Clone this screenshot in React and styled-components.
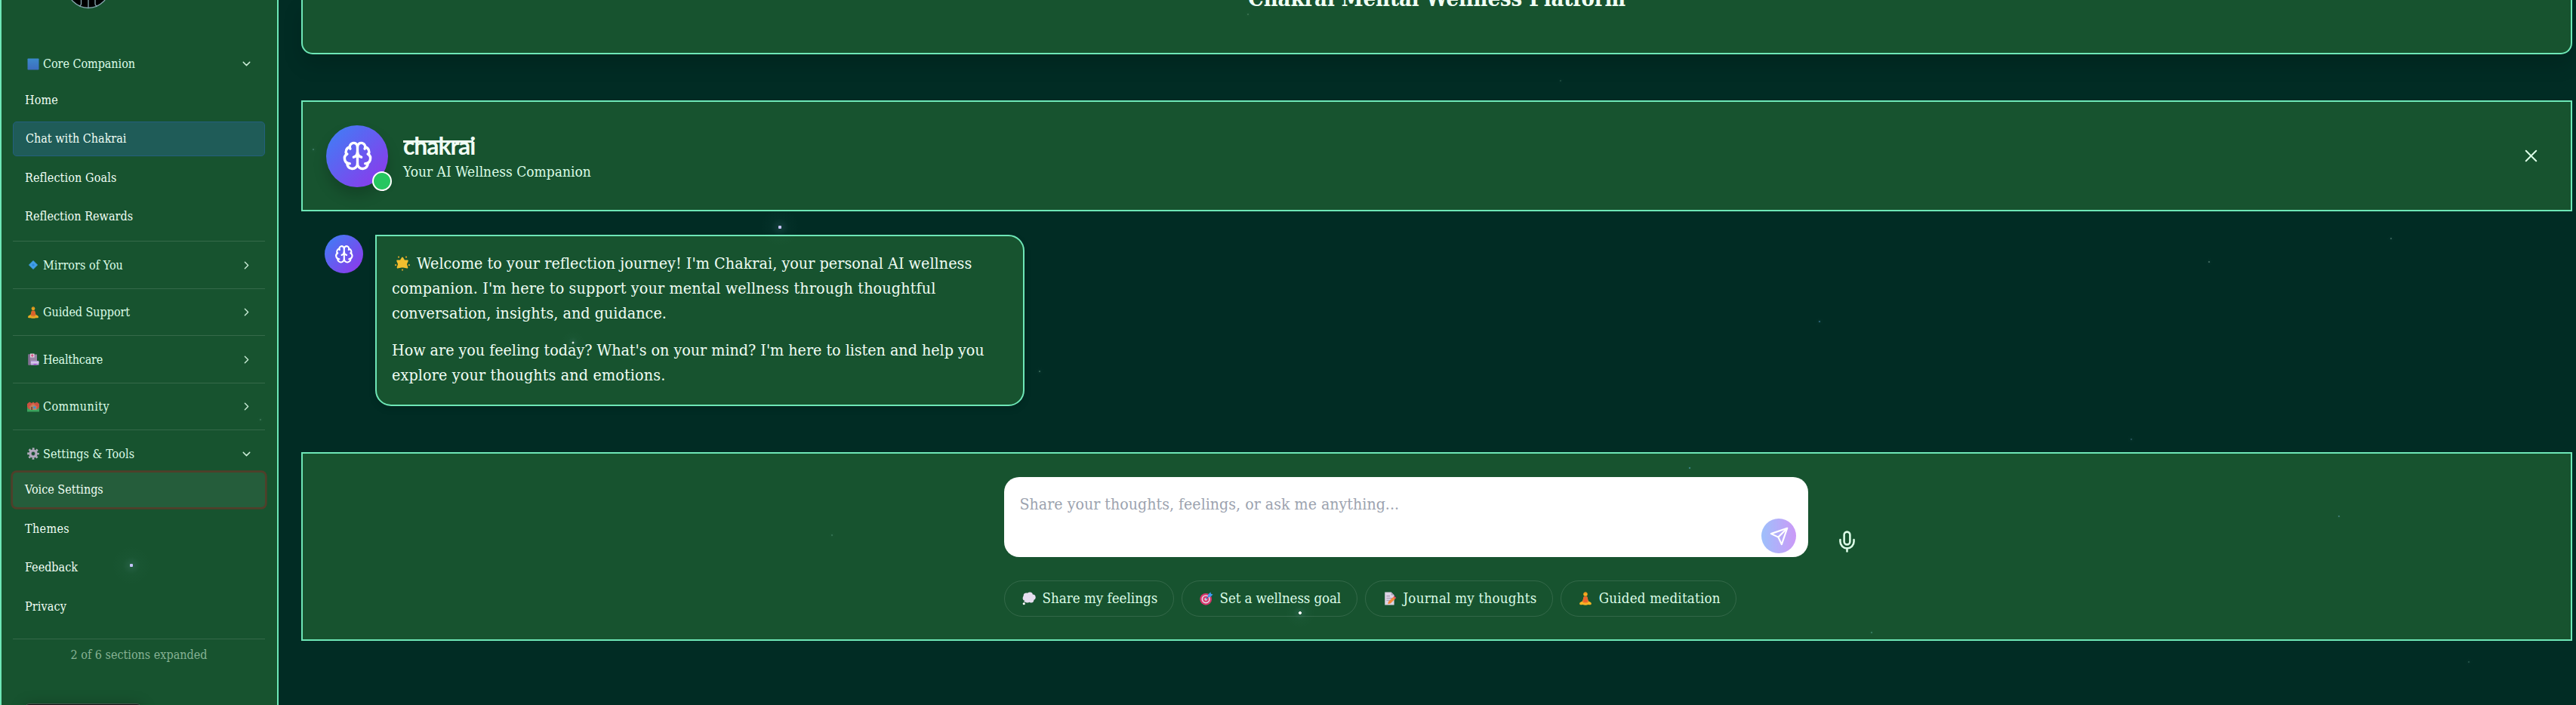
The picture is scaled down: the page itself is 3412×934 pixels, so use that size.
import React from "react";
import styled, { createGlobalStyle, css } from "styled-components";
import { Brain, ChevronDown, ChevronRight, Mic, X } from "lucide-react";

const MINT = "#6ee7b7";
const PANEL = "#17532f";

const GlobalStyle = createGlobalStyle`
  *, *::before, *::after { box-sizing: border-box; }
  body {
    margin: 0;
    background: #012c24;
    color: #f0fdf4;
    font-family: "DejaVu Serif Condensed", "DejaVu Serif", serif;
    overflow: hidden;
  }
  button { font: inherit; color: inherit; background: none; border: 0; padding: 0; }
  p, h1, h2 { margin: 0; font-weight: 400; }
`;

const Shell = styled.div`
  position: relative;
  display: grid;
  grid-template-columns: 369px 1fr;
  height: 934px;
  overflow: hidden;
`;

/* ---------- sidebar ---------- */

const Sidebar = styled.aside`
  display: flex;
  flex-direction: column;
  padding: 0 16px 0 15px;
  border: solid ${MINT};
  border-width: 0 2px;
  background: ${PANEL};
  overflow: hidden;
`;

const LogoArea = styled.div`
  flex: none;
  display: flex;
  align-items: flex-start;
  height: 52.8px;
  padding-left: 71px;
`;

const Section = styled.section`
  flex: none;
  border-top: 1px solid ${(p) => (p.$first ? "transparent" : "rgba(255,255,255,0.13)")};
  padding: 5.75px 0 ${(p) => (p.$open ? "9.4px" : "5.5px")};
`;

const SectionHeader = styled.button`
  display: flex;
  align-items: center;
  width: 100%;
  height: 50.25px;
  padding: 0 16.5px 0 16px;
  color: #dcfce7;
  font-size: 16px;
  svg:last-child { margin-left: auto; opacity: 0.9; }
`;

const Label = styled.span`
  letter-spacing: ${(p) => p.$track || 0}px;
  white-space: nowrap;
`;

const IconSlot = styled.span`
  flex: none;
  display: flex;
  justify-content: center;
  width: ${(p) => p.$w || 19}px;
  margin-right: ${(p) => p.$gap || 5}px;
`;

const NavList = styled.nav`
  display: flex;
  flex-direction: column;
  gap: 5.4px;
`;

const NavItem = styled.button`
  display: flex;
  align-items: center;
  height: 46px;
  padding: 0 0 1px 16px;
  border-radius: 5px;
  font-size: 16px;
  ${(p) =>
    p.$active &&
    css`
      border: 1px solid #235f7e;
      background: #1f5c58;
    `}
  ${(p) =>
    p.$focused &&
    css`
      background: #255d3b;
      box-shadow: 0 0 0 2.7px #503f2a;
    `}
`;

const SidebarFooter = styled.div`
  flex: none;
  margin-top: 10px;
  padding-top: 11px;
  border-top: 1px solid rgba(255, 255, 255, 0.13);
  text-align: center;
  font-size: 16px;
  line-height: 20px;
  color: #86b294;
`;

const BottomCard = styled.div`
  position: absolute;
  left: 32px;
  top: 932px;
  width: 156px;
  height: 40px;
  border: 1px solid #4b5a52;
  border-radius: 7px;
  background: #101413;
  box-shadow: 0 2px 20px rgba(0, 0, 0, 0.24);
`;

/* ---------- main column ---------- */

const Main = styled.main`
  display: flex;
  flex-direction: column;
  padding: 0 5px 0 30px;
  min-width: 0;
`;

const Hero = styled.header`
  flex: none;
  height: 72px;
  border: 2px solid ${MINT};
  border-top: 0;
  border-radius: 0 0 15px 15px;
  background: ${PANEL};
  box-shadow: 0 14px 26px rgba(0, 0, 0, 0.14);
  text-align: center;
`;

const HeroTitle = styled.h1`
  margin-top: -20px;
  font-size: 29px;
  font-weight: 700;
  line-height: 36px;
  letter-spacing: -0.083px;
`;

const ChatHeader = styled.section`
  flex: none;
  display: flex;
  align-items: center;
  height: 147px;
  margin-top: 61px;
  padding: 0 39.5px 0 31px;
  border: 2px solid ${MINT};
  background: ${PANEL};
`;

const Avatar = styled.div`
  position: relative;
  flex: none;
  display: flex;
  align-items: center;
  justify-content: center;
  width: ${(p) => p.$size}px;
  height: ${(p) => p.$size}px;
  border-radius: 50%;
  background: linear-gradient(135deg, #3b82f6, #9333ea);
  color: #fff;
  box-shadow: ${(p) => (p.$raised ? "0 11px 18px rgba(0,0,0,0.18)" : "none")};
`;

const OnlineDot = styled.span`
  position: absolute;
  right: -5px;
  bottom: -5px;
  width: 26px;
  height: 26px;
  border: 2px solid #fff;
  border-radius: 50%;
  background: #26c660;
`;

const Identity = styled.div`
  margin-left: 20px;
  padding-top: 1px;
`;

const Wordmark = styled.h2`
  position: relative;
  width: 93px;
  height: 40px;
  font-family: Lato, sans-serif;
  font-size: 32px;
  font-weight: 700;
  line-height: 38px;
  letter-spacing: -1.1px;
  white-space: nowrap;
  &::before {
    content: "";
    position: absolute;
    left: 0;
    top: 12px;
    width: 93px;
    height: 3px;
    background: currentColor;
  }
`;

const Tagline = styled.p`
  font-size: 19px;
  line-height: 26px;
  color: #dcfce7;
`;

const CloseButton = styled.button`
  display: flex;
  margin-left: auto;
  color: #dcfce7;
`;

const Conversation = styled.section`
  flex: none;
  display: flex;
  align-items: flex-start;
  gap: 16px;
  margin: 31px 0 61px;
  padding-left: 31px;
`;

const Bubble = styled.article`
  width: 860px;
  height: 227px;
  padding: 19px 20px;
  border: 2px solid ${MINT};
  border-radius: 0 21px 21px 21px;
  background: ${PANEL};
  box-shadow: 0 4px 10px rgba(0, 0, 0, 0.12);
`;

const Paragraph = styled.p`
  font-size: 21.3px;
  line-height: 33px;
  & + & { margin-top: 16px; }
`;

const Line = styled.span`
  display: flex;
  align-items: center;
  height: 33px;
  white-space: nowrap;
  letter-spacing: ${(p) => p.$track || 0}px;
`;

const Composer = styled.section`
  flex: none;
  height: 250px;
  padding: 31px 0 0 929px;
  border: 2px solid ${MINT};
  background: ${PANEL};
`;

const InputRow = styled.div`
  display: flex;
  align-items: flex-end;
`;

const InputBox = styled.div`
  display: flex;
  align-items: flex-end;
  justify-content: space-between;
  width: 1065px;
  height: 106px;
  padding: 0 16px 5px 20.5px;
  border-radius: 20px;
  background: #fff;
`;

const Placeholder = styled.span`
  align-self: flex-start;
  margin-top: 20px;
  font-size: 21.2px;
  line-height: 32px;
  color: #9ca3af;
`;

const SendButton = styled.button`
  display: flex;
  align-items: center;
  justify-content: center;
  width: 46px;
  height: 46px;
  border-radius: 50%;
  background: linear-gradient(90deg, #9dc0fb, #cb99f7);
`;

const MicButton = styled.button`
  display: flex;
  margin: 0 0 5px 35.5px;
  color: #dcfce7;
`;

const ChipRow = styled.div`
  display: flex;
  gap: 10.3px;
  margin-top: 31px;
`;

const Chip = styled.button`
  display: flex;
  align-items: center;
  height: 48px;
  padding: 0 20.5px 1px;
  border: 1px solid rgba(255, 255, 255, 0.12);
  border-radius: 24px;
  color: #dcfce7;
  font-size: 18.6px;
`;

/* ---------- drifting specks ---------- */

const SpeckLayer = styled.div`
  position: absolute;
  inset: 0;
  pointer-events: none;
`;

const Speck = styled.i`
  position: absolute;
  left: ${(p) => p.$x - p.$glow}px;
  top: ${(p) => p.$y - p.$glow}px;
  width: ${(p) => p.$glow * 2}px;
  height: ${(p) => p.$glow * 2}px;
  border-radius: 50%;
  opacity: ${(p) => p.$o};
  background: radial-gradient(circle closest-side, ${(p) => p.$c} 0 ${(p) => p.$r}px, rgba(150, 200, 230, 0.09) ${(p) => p.$r + 0.5}px, rgba(120, 200, 200, 0.02) 45%, transparent 100%);
`;

/* ---------- pictograms ---------- */

const Pic = ({ size, children }) => (
  <svg width={size} height={size} viewBox="0 0 16 16">{children}</svg>
);

const BlueSquare = ({ size = 16 }) => (
  <Pic size={size}>
    <defs><linearGradient id="sq" x2="0" y2="1"><stop stopColor="#418fdc" /><stop offset="1" stopColor="#4270d0" /></linearGradient></defs>
    <rect x="0.5" y="0.5" width="15" height="15" rx="0.8" fill="url(#sq)" />
  </Pic>
);
const BlueDiamond = ({ size = 16 }) => (
  <Pic size={size}>
    <path d="M8 2.500l5.500 5.500-5.500 5.500-5.500-5.500z" fill="#47a7fb" stroke="#47a7fb" strokeLinejoin="round" />
    <path d="M8 6l2 2-2 2-2-2z" fill="#2c90ee" />
  </Pic>
);
const Meditation = ({ size = 16 }) => (
  <Pic size={size}>
    <path d="M1 14c0-1.700 2-2.500 3.500-3L6 6h4l1.500 5c1.500.5 3.500 1.300 3.500 3 0 1.500-2 1.500-3.500 1.200-2.500.8-4.500.8-7 0C3 15.500 1 15.500 1 14z" fill="#fdb524" />
    <path d="M6 5.500h4l1.300 6c-1 1.300-5.600 1.300-6.600 0z" fill="#ee642b" />
    <circle cx="8" cy="2.800" r="2.400" fill="#f7ac1f" />
    <path d="M5.800 2.600a2.200 2.200 0 014.400 0C9 1.700 7 1.700 5.800 2.600z" fill="#e8941c" />
    <path d="M5 12.500c2 1 4 1 6 0" stroke="#e8872a" fill="none" strokeWidth="0.8" />
  </Pic>
);
const Hospital = ({ size = 16 }) => (
  <Pic size={size}>
    <path d="M1.500 1.500H13V15.500H1.500z" fill="#a58bb3" />
    <path d="M1.500 1.500H4v14H1.500z" fill="#8f729f" />
    <rect x="4" y="0.500" width="5.500" height="5" fill="#f7e3f2" />
    <path d="M6.750 1.200v3.600M5 3h3.500" stroke="#e8337f" strokeWidth="1.200" />
    <rect x="5" y="10" width="10.500" height="5.500" fill="#d4b4f5" />
    <path d="M5 12.500h10.500" stroke="#f4e4ff" />
    <rect x="8.500" y="14" width="4" height="1.500" fill="#b455e0" />
  </Pic>
);
const Houses = ({ size = 16 }) => (
  <Pic size={size}>
    <path d="M0 14.500V8h16v6.500z" fill="#3fac62" />
    <path d="M0 8V4l3-2.500L6 3l2-1.500L10 3l3-1.500L16 4v4l-2 3H2z" fill="#dd5143" />
    <path d="M3.500 12V8L8 4l4.500 4v4z" fill="#c88f6c" />
    <path d="M2.500 8.500L8 3.700l5.500 4.800" stroke="#f0694e" strokeWidth="1.300" fill="none" />
    <rect x="8.300" y="7.500" width="3" height="2.700" fill="#3d9ae8" />
    <rect x="5" y="8" width="2.200" height="4" fill="#8a4f3d" />
  </Pic>
);
const Gear = ({ size = 16 }) => (
  <Pic size={size}>
    <circle cx="8" cy="8" r="6.600" fill="none" stroke="#c9bad3" strokeWidth="2.400" strokeDasharray="2.700 2.484" strokeDashoffset="1.350" />
    <circle cx="8" cy="8" r="4.100" fill="none" stroke="#c3b3ce" strokeWidth="3.400" />
    <circle cx="8" cy="8" r="2.600" fill="none" stroke="#8e7d9b" strokeWidth="0.600" />
  </Pic>
);
const GlowStar = ({ size = 20 }) => (
  <Pic size={size}>
    <path d="M8 2l1.800 3.100 3.600.1-1.500 3.400 1.200 3.900L8 11.500l-5.100 1 1.200-3.900-1.500-3.400 3.600-.1z" fill="#f2bf2f" stroke="#f2bf2f" strokeWidth="1.600" strokeLinejoin="round" />
    <g fill="#dca52b">
      <circle cx="4" cy="1.200" r="0.900" /><circle cx="12" cy="1.200" r="0.900" />
      <circle cx="0.900" cy="9.700" r="0.900" /><circle cx="15.100" cy="9.700" r="0.900" /><circle cx="8" cy="14.800" r="0.900" />
    </g>
  </Pic>
);
const Thought = ({ size = 18 }) => (
  <Pic size={size}>
    <g fill="#e6deef">
      <circle cx="5" cy="5" r="3.600" /><circle cx="9" cy="3.800" r="3.300" /><circle cx="12.300" cy="6.500" r="3.400" />
      <circle cx="10.500" cy="9.600" r="3.200" /><circle cx="6" cy="9.300" r="3.500" /><circle cx="3.500" cy="7.500" r="2.900" />
    </g>
    <circle cx="2" cy="14" r="1.400" fill="#fff" />
    <circle cx="2.800" cy="11.600" r="0.800" fill="#cfc4dc" />
  </Pic>
);
const Target = ({ size = 18 }) => (
  <Pic size={size}>
    <circle cx="7.300" cy="8.700" r="7" fill="#d8366c" />
    <circle cx="7.300" cy="8.700" r="5" fill="#e6d5e4" />
    <circle cx="7.300" cy="8.700" r="3.500" fill="#d8366c" />
    <circle cx="7.300" cy="8.700" r="1.700" fill="#e6d5e4" />
    <path d="M7.300 8.700L12 4" stroke="#2a6cc4" />
    <path d="M10 6V3.200L12.800.4l.6 2 2.200.6-2.800 3z" fill="#3a9cf2" />
  </Pic>
);
const Memo = ({ size = 18 }) => (
  <Pic size={size}>
    <path d="M2 .5h7.500L13 4v11.500H2z" fill="#dcd3e4" />
    <path d="M9.500.5L13 4H9.500z" fill="#a89bb8" />
    <path d="M4 5h4M4 7.500h7M4 10h4" stroke="#a79bb4" strokeWidth="0.900" />
    <path d="M5.500 14.500l.7-3L12 6l2.300 2.200-5.700 5.600z" fill="#f58a3c" />
    <path d="M12 6l1.200-1 2.200 2.200-1.100 1z" fill="#e5486e" />
  </Pic>
);

const LogoMark = () => (
  <svg width="58" height="12" viewBox="0 0 58 12">
    <circle cx="29" cy="-17.500" r="28" fill="#000" stroke="#86a9b0" strokeWidth="1.300" />
    <path d="M29 0v10.500M19.500 0v5.500q0 1.500-2.500 2.600M38 0v5.500q0 1.500 2.500 2.600" stroke="#86a9b0" strokeWidth="1.300" fill="none" />
  </svg>
);

const SendIcon = () => (
  <svg width="27" height="27" viewBox="0 0 24 24" fill="none" stroke="#fff" strokeWidth="1.900" strokeLinecap="round" strokeLinejoin="round">
    <path d="M21.500 2.500l-6.500 19-4-8.500-8.500-4z" />
    <path d="M21.500 2.500L11 13" />
  </svg>
);

/* ---------- data ---------- */

const SECTIONS = [
  { title: "Core Companion", track: -0.04, icon: BlueSquare, open: true, items: [
    { text: "Home", track: 0.15 }, { text: "Chat with Chakrai", active: true }, { text: "Reflection Goals", track: 0.12 }, { text: "Reflection Rewards", track: 0.04 },
  ] },
  { title: "Mirrors of You", track: 0.05, icon: BlueDiamond },
  { title: "Guided Support", track: -0.05, icon: Meditation },
  { title: "Healthcare", track: -0.24, icon: Hospital },
  { title: "Community", track: 0.44, icon: Houses },
  { title: "Settings & Tools", track: 0.07, icon: Gear, open: true, items: [
    { text: "Voice Settings", focused: true }, { text: "Themes", track: 0.35 }, { text: "Feedback" }, { text: "Privacy", track: 0.12 },
  ] },
];

const CHIPS = [
  { text: "Share my feelings", icon: Thought },
  { text: "Set a wellness goal", icon: Target, track: -0.12 },
  { text: "Journal my thoughts", icon: Memo, track: 0.23 },
  { text: "Guided meditation", icon: Meditation, track: 0.2 },
];

const SPECKS = [
  { x: 1033, y: 301, r: 2, glow: 26, o: 1, c: "#c5c3fb" },
  { x: 174, y: 749, r: 2, glow: 26, o: 1, c: "#c5c3fb" },
  { x: 1722, y: 812, r: 1.7, glow: 20, o: 1, c: "#ffffff" },
  { x: 758.5, y: 453.5, r: 1.2, glow: 16, o: 0.9, c: "#ffffff" },
  { x: 415, y: 198, r: 1, glow: 8, o: 0.25, c: "#9fd8e8" },
  { x: 1377, y: 492, r: 0.9, glow: 8, o: 0.3, c: "#9fd8b8" },
  { x: 345, y: 556, r: 0.8, glow: 7, o: 0.22, c: "#9fd8b8" },
  { x: 1653, y: 19, r: 0.7, glow: 7, o: 0.18, c: "#c0e8c8" },
  { x: 2066.5, y: 106.5, r: 0.6, glow: 7, o: 0.2, c: "#9fd8b8" },
  { x: 2409.5, y: 425.5, r: 0.6, glow: 6, o: 0.5, c: "#5aa8e0" },
  { x: 2925.5, y: 346.5, r: 0.6, glow: 6, o: 0.4, c: "#b0d8c8" },
  { x: 3166.5, y: 315.5, r: 0.6, glow: 6, o: 0.35, c: "#b0d8c8" },
  { x: 2822.5, y: 581.5, r: 0.5, glow: 6, o: 0.4, c: "#80b0e0" },
  { x: 3097.5, y: 683.5, r: 0.6, glow: 4, o: 0.5, c: "#70b0d0" },
  { x: 2478.5, y: 837.5, r: 0.5, glow: 4, o: 0.5, c: "#70d0c0" },
  { x: 2237.5, y: 619.5, r: 0.6, glow: 4, o: 0.55, c: "#60b8e8" },
  { x: 3269.5, y: 876.5, r: 0.5, glow: 6, o: 0.35, c: "#80c8b0" },
  { x: 1101.5, y: 708.5, r: 0.6, glow: 5, o: 0.3, c: "#80c8b0" },
];

function NavSection({ section, first }) {
  const Icon = section.icon;
  const Chevron = section.open ? ChevronDown : ChevronRight;
  return (
    <Section $first={first} $open={section.open}>
      <SectionHeader>
        <IconSlot><Icon /></IconSlot>
        <Label $track={section.track}>{section.title}</Label>
        <Chevron size={17} />
      </SectionHeader>
      {section.open && (
        <NavList>
          {section.items.map((item) => (
            <NavItem key={item.text} $active={item.active} $focused={item.focused}>
              <Label $track={item.track}>{item.text}</Label>
            </NavItem>
          ))}
        </NavList>
      )}
    </Section>
  );
}

export default function App() {
  return (
    <Shell>
      <GlobalStyle />
      <Sidebar>
        <LogoArea><LogoMark /></LogoArea>
        {SECTIONS.map((s, i) => <NavSection key={s.title} section={s} first={i === 0} />)}
        <SidebarFooter>2 of 6 sections expanded</SidebarFooter>
      </Sidebar>

      <Main>
        <Hero><HeroTitle>Chakrai Mental Wellness Platform</HeroTitle></Hero>

        <ChatHeader>
          <Avatar $size={82} $raised>
            <Brain size={41} />
            <OnlineDot />
          </Avatar>
          <Identity>
            <Wordmark>chakrai</Wordmark>
            <Tagline>Your AI Wellness Companion</Tagline>
          </Identity>
          <CloseButton aria-label="Close"><X size={27} strokeWidth={1.8} /></CloseButton>
        </ChatHeader>

        <Conversation>
          <Avatar $size={51}><Brain size={25.6} /></Avatar>
          <Bubble>
            <Paragraph>
              <Line $track={0.042}>
                <IconSlot $w={28} $gap={5}><GlowStar /></IconSlot>
                Welcome to your reflection journey! I'm Chakrai, your personal AI wellness
              </Line>
              <Line $track={0.143}>companion. I'm here to support your mental wellness through thoughtful</Line>
              <Line $track={0.03}>conversation, insights, and guidance.</Line>
            </Paragraph>
            <Paragraph>
              <Line $track={-0.03}>How are you feeling today? What's on your mind? I'm here to listen and help you</Line>
              <Line $track={0.14}>explore your thoughts and emotions.</Line>
            </Paragraph>
          </Bubble>
        </Conversation>

        <Composer>
          <InputRow>
            <InputBox>
              <Placeholder>Share your thoughts, feelings, or ask me anything...</Placeholder>
              <SendButton aria-label="Send"><SendIcon /></SendButton>
            </InputBox>
            <MicButton aria-label="Voice input"><Mic size={31} /></MicButton>
          </InputRow>
          <ChipRow>
            {CHIPS.map(({ text, icon: Icon, track }) => (
              <Chip key={text}>
                <IconSlot $w={23} $gap={6}><Icon size={18} /></IconSlot>
                <Label $track={track}>{text}</Label>
              </Chip>
            ))}
          </ChipRow>
        </Composer>
      </Main>

      <BottomCard />
      <SpeckLayer>
        {SPECKS.map((s) => <Speck key={`${s.x}-${s.y}`} $x={s.x} $y={s.y} $r={s.r} $glow={s.glow} $o={s.o} $c={s.c} />)}
      </SpeckLayer>
    </Shell>
  );
}
